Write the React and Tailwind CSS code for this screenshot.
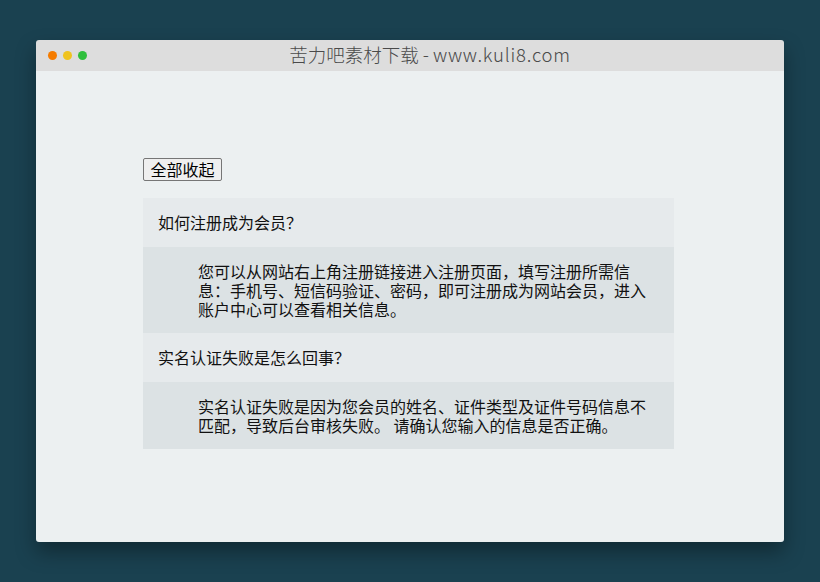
export default function App() {
  const items = [
    {
      q: "如何注册成为会员？",
      a: "您可以从网站右上角注册链接进入注册页面，填写注册所需信息：手机号、短信码验证、密码，即可注册成为网站会员，进入账户中心可以查看相关信息。",
    },
    {
      q: "实名认证失败是怎么回事？",
      a: "实名认证失败是因为您会员的姓名、证件类型及证件号码信息不匹配，导致后台审核失败。 请确认您输入的信息是否正确。",
    },
  ];
  return (
    <div className="w-[820px] h-[582px] bg-[#1a4150] pt-[40px] px-[36px] font-['Noto_Sans_CJK_SC',sans-serif] [text-spacing-trim:space-all]">
      <div className="h-[502px] flex flex-col rounded-[3px] overflow-hidden shadow-[0_10px_20px_rgba(0,0,0,0.35)]">
        <div className="h-[31px] bg-[#dddddd] flex items-center relative shrink-0">
          <div className="flex gap-[6px] pl-[12px]">
            <span className="w-[9px] h-[9px] rounded-full bg-[#f57c00]" />
            <span className="w-[9px] h-[9px] rounded-full bg-[#efc31f]" />
            <span className="w-[9px] h-[9px] rounded-full bg-[#2fbf3c]" />
          </div>
          <div className="absolute inset-0 flex items-center justify-center text-[18.5px] font-light text-[#4a4a4a] leading-none pl-[40px] pb-[2px]">
            苦力吧素材下载 - <span className="tracking-[0.8px] ml-[4px]">www.kuli8.com</span>
          </div>
        </div>
        <div className="flex-1 bg-[#ecf0f1] pl-[107px] pt-[87px]">
          <button className="block h-[23px] w-[79px] border border-[#767676] rounded-[2px] bg-[#efefef] text-[16px] leading-[19px] text-black">
            全部收起
          </button>
          <div className="w-[531px] mt-[17px] text-[16px] leading-[19px] text-[#111]">
            {items.map((it, i) => (
              <div key={i}>
                <div className="bg-[#e6eaec] px-[15px] py-[15px]">{it.q}</div>
                <div className="bg-[#dce2e4] pl-[55px] py-[14.5px]">
                  <p className="w-[456px]">{it.a}</p>
                </div>
              </div>
            ))}
          </div>
        </div>
      </div>
    </div>
  );
}
